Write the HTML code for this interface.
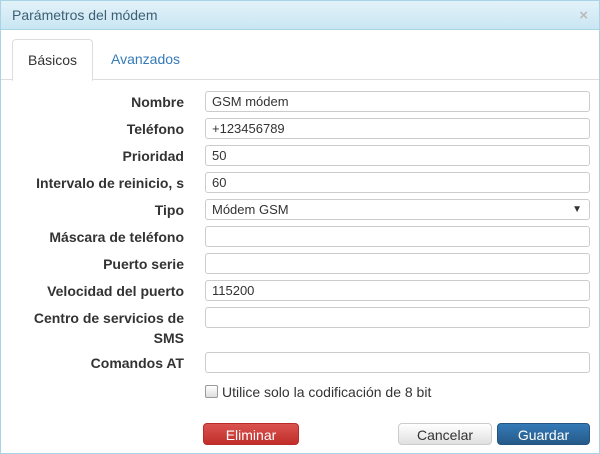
<!DOCTYPE html><html><head><style>
body{margin:0;width:600px;height:454px;overflow:hidden;font-family:"Liberation Sans",sans-serif;font-size:14px;color:#333;background:#fff}
.dlg{position:absolute;left:0;top:0;width:598px;height:452px;border:1px solid #a8d4e6;background:#fff}
.hd{height:28px;background:linear-gradient(#e3f2f9,#c9e6f3);border-bottom:1px solid #a8d4e6;color:#3d5f74;font-size:14px;line-height:28px;padding-left:11px}
.x{position:absolute;right:11px;top:6px;color:#bbb;font-size:15px;font-weight:bold}
.tabs{position:absolute;left:0;top:78px;width:598px;border-top:1px solid #ddd}
.tab{position:absolute;top:38px;height:41px;line-height:41px;font-size:14px}
.t1{left:11px;width:79px;border:1px solid #ddd;border-bottom:none;border-radius:4px 4px 0 0;background:#fff;text-align:center;height:41px}
.t2{left:110px;color:#337ab7}
.lb{position:absolute;right:415px;font-weight:bold;font-size:14px;text-align:right;line-height:20px;white-space:nowrap}
.in{position:absolute;left:204px;width:377px;height:19px;border:1px solid #ccc;border-radius:3px;font-size:13px;line-height:19px;padding-left:6px;box-sizing:content-box}
.btn{position:absolute;top:422px;height:22px;border-radius:4px;font-size:14px;line-height:22px;text-align:center;box-sizing:border-box}
</style></head><body><div class="dlg">
<div class="hd">Parámetros del módem</div><div class="x">×</div>
<div class="tabs"></div>
<div class="tab t1">Básicos</div><div class="tab t2">Avanzados</div>
<div class="lb" style="top:91px">Nombre</div><div class="in" style="top:90px">GSM módem</div>
<div class="lb" style="top:118px">Teléfono</div><div class="in" style="top:117px">+123456789</div>
<div class="lb" style="top:145px">Prioridad</div><div class="in" style="top:144px">50</div>
<div class="lb" style="top:172px">Intervalo de reinicio, s</div><div class="in" style="top:171px">60</div>
<div class="lb" style="top:199px">Tipo</div><div class="in" style="top:198px">Módem GSM<span style="position:absolute;right:7px;font-size:10px">▼</span></div>
<div class="lb" style="top:226px">Máscara de teléfono</div><div class="in" style="top:225px"></div>
<div class="lb" style="top:253px">Puerto serie</div><div class="in" style="top:252px"></div>
<div class="lb" style="top:280px">Velocidad del puerto</div><div class="in" style="top:279px">115200</div>
<div class="lb" style="top:307px">Centro de servicios de<br>SMS</div><div class="in" style="top:306px"></div>
<div class="lb" style="top:352px">Comandos AT</div><div class="in" style="top:351px"></div>
<div style="position:absolute;left:204px;top:384px;width:11px;height:11px;border:1px solid #999;border-radius:2px;background:linear-gradient(#fff,#ddd)"></div>
<div style="position:absolute;left:221px;top:382px;font-size:14px;line-height:18px">Utilice solo la codificación de 8 bit</div>
<div class="btn" style="left:202px;width:96px;background:linear-gradient(#d9534f,#c12e2a);border:1px solid #b92c28;color:#fff">Eliminar</div>
<div class="btn" style="left:397px;width:94px;background:linear-gradient(#fff,#e0e0e0);border:1px solid #ccc;color:#333">Cancelar</div>
<div class="btn" style="left:496px;width:93px;background:linear-gradient(#337ab7,#265a88);border:1px solid #245580;color:#fff">Guardar</div>
</div></body></html>
